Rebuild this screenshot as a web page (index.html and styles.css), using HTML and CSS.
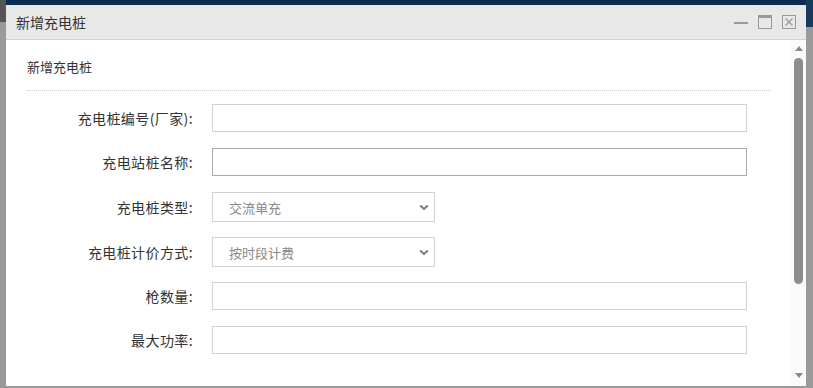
FILE: index.html
```html
<!DOCTYPE html>
<html lang="zh-CN">
<head>
<meta charset="UTF-8" />
<meta name="viewport" content="width=device-width, initial-scale=1" />
<title>新增充电桩</title>
<link rel="stylesheet" href="styles.css">
</head>
<body>
  <div class="page">
    <div class="dialogue">
      <div class="dialogue-tete">
        <span class="dialogue-titre">新增充电桩</span>
        <div class="outils">
          <span class="outil outil-min"></span>
          <span class="outil outil-max"></span>
          <span class="outil outil-fermer">
            <svg width="12" height="12" viewBox="0 0 12 12"><path d="M2.5 2.5 L9.5 9.5 M9.5 2.5 L2.5 9.5" stroke="#9a9a9a" stroke-width="1.4" fill="none"/></svg>
          </span>
        </div>
      </div>
      <div class="dialogue-corps">
        <div class="contenu">
          <div class="sous-titre">新增充电桩</div>
          <form class="formulaire">
            <div class="ligne">
              <label for="code">充电桩编号(厂家):</label>
              <input type="text" id="code">
            </div>
            <div class="ligne">
              <label for="nom">充电站桩名称:</label>
              <input type="text" id="nom" class="actif">
            </div>
            <div class="ligne ligne-select">
              <label for="type">充电桩类型:</label>
              <div class="choix">
                <select id="type">
                  <option>交流单充</option>
                  <option>直流单充</option>
                </select>
                <svg class="chevron" width="10" height="7" viewBox="0 0 10 7"><path d="M1.2 1.5 L5 5 L8.8 1.5" stroke="#7a7a7a" stroke-width="2" fill="none"/></svg>
              </div>
            </div>
            <div class="ligne ligne-select">
              <label for="tarif">充电桩计价方式:</label>
              <div class="choix">
                <select id="tarif">
                  <option>按时段计费</option>
                  <option>统一计费</option>
                </select>
                <svg class="chevron" width="10" height="7" viewBox="0 0 10 7"><path d="M1.2 1.5 L5 5 L8.8 1.5" stroke="#7a7a7a" stroke-width="2" fill="none"/></svg>
              </div>
            </div>
            <div class="ligne">
              <label for="pistolets">枪数量:</label>
              <input type="text" id="pistolets">
            </div>
            <div class="ligne">
              <label for="puissance">最大功率:</label>
              <input type="text" id="puissance">
            </div>
          </form>
        </div>
        <div class="defilement">
          <span class="fleche fleche-haut"></span>
          <span class="curseur"></span>
          <span class="fleche fleche-bas"></span>
        </div>
      </div>
    </div>
  </div>
</body>
</html>
```

FILE: styles.css
```css
:root {
  --police: "Noto Sans CJK SC", "Noto Sans", "Liberation Sans", sans-serif;
  --gris-fond: #9a9a9a;
  --bordure: #d2d2d2;
}
body {
  margin: 0;
  font-family: var(--police);
  color: #333;
}
.page {
  position: relative;
  width: 813px;
  height: 388px;
  overflow: hidden;
  background:
    linear-gradient(to right, transparent 806px, #17395a 806px) 0 0 / 100% 27px no-repeat,
    linear-gradient(to right, #555 6px, transparent 6px) 0 0 / 100% 22px no-repeat,
    linear-gradient(#0b2e4e 0 5px, var(--gris-fond) 5px);
}
.dialogue {
  position: absolute;
  left: 6px;
  top: 5px;
  width: 800px;
  height: 381px;
  background: #fff;
  display: flex;
  flex-direction: column;
}
.dialogue-tete {
  height: 34px;
  background: #e8e8e8;
  border-bottom: 1px solid #d0d0d0;
  display: flex;
  align-items: center;
  padding: 0 10px 0 10px;
  flex-shrink: 0;
}
.dialogue-titre {
  font-size: 14px;
  color: #333;
  flex: 1;
  line-height: 20px;
}
.outils {
  display: flex;
  align-items: center;
  gap: 10px;
}
.outil {
  display: block;
  width: 14px;
  height: 14px;
  box-sizing: border-box;
}
.outil-min {
  height: 2px;
  background: #9a9a9a;
  margin-top: 2px;
}
.outil-max {
  border: 1px solid #9a9a9a;
  border-top-width: 3px;
}
.outil-fermer {
  border: 1px solid #9a9a9a;
  display: flex;
  align-items: center;
  justify-content: center;
}
.dialogue-corps {
  flex: 1;
  display: flex;
  min-height: 0;
}
.contenu {
  flex: 1;
  padding: 0 20px 0 21px;
  overflow: hidden;
}
.sous-titre {
  font-size: 13px;
  line-height: 20px;
  padding: 17px 0 13px;
  border-bottom: 1px dotted #cfcfcf;
}
.formulaire {
  margin-top: 13px;
}
.ligne {
  display: flex;
  align-items: center;
  height: 28px;
  margin-bottom: 16px;
}
.ligne-select {
  height: 30px;
  margin-bottom: 15px;
}
.ligne label {
  width: 166px;
  margin-right: 19px;
  text-align: right;
  font-size: 14px;
  line-height: 20px;
  letter-spacing: 0.4px;
  color: #333;
}
.ligne input {
  width: 535px;
  height: 28px;
  box-sizing: border-box;
  border: 1px solid var(--bordure);
  padding: 0 10px;
  font-family: var(--police);
  font-size: 13px;
  outline: none;
}
.ligne input.actif {
  border-color: #aaa;
}
.choix {
  position: relative;
  width: 223px;
  height: 30px;
}
.choix select {
  appearance: none;
  -webkit-appearance: none;
  width: 100%;
  height: 100%;
  box-sizing: border-box;
  border: 1px solid var(--bordure);
  border-radius: 0;
  background: #fff;
  padding: 0 0 0 16px;
  font-family: var(--police);
  font-size: 13px;
  color: #888;
  outline: none;
}
.chevron {
  position: absolute;
  right: 6px;
  top: 12px;
  pointer-events: none;
}
.defilement {
  width: 15px;
  background: #fafafa;
  display: flex;
  flex-direction: column;
  align-items: center;
  flex-shrink: 0;
}
.fleche {
  width: 0;
  height: 0;
  border-left: 4.5px solid transparent;
  border-right: 4.5px solid transparent;
}
.fleche-haut {
  margin-top: 6px;
  border-bottom: 5px solid #8a8a8a;
}
.curseur {
  width: 9px;
  height: 226px;
  margin-top: 7px;
  background: #8c8c8c;
  border-radius: 5px;
}
.fleche-bas {
  margin-top: auto;
  margin-bottom: 8px;
  border-top: 5px solid #8a8a8a;
}
```
